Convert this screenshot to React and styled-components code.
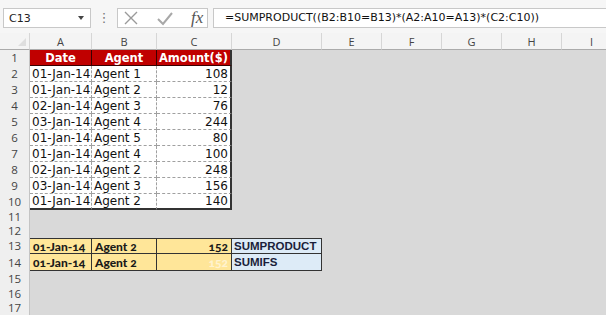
import React from 'react';
import styled, { createGlobalStyle, css } from 'styled-components';

const GlobalStyle = createGlobalStyle`
  html, body {
    margin: 0;
    padding: 0;
    background: #ffffff;
  }
  * { box-sizing: border-box; }
`;

// data
const columns = ['A', 'B', 'C', 'D', 'E', 'F', 'G', 'H', 'I'];
const colWidths = '30px 62px 65px 75px 90px 60px 60px 60px 60px 60px';
const rowHeights = '17px 16px 16px 16px 16px 16px 16px 16px 16px 16px 16px 14px 14px 16px 17px 15px 15px 14px';

const records = [
  ['01-Jan-14', 'Agent 1', 108],
  ['01-Jan-14', 'Agent 2', 12],
  ['02-Jan-14', 'Agent 3', 76],
  ['03-Jan-14', 'Agent 4', 244],
  ['01-Jan-14', 'Agent 5', 80],
  ['01-Jan-14', 'Agent 4', 100],
  ['02-Jan-14', 'Agent 2', 248],
  ['03-Jan-14', 'Agent 3', 156],
  ['01-Jan-14', 'Agent 2', 140],
];

const results = [
  { date: '01-Jan-14', agent: 'Agent 2', value: 152, label: 'SUMPRODUCT', faint: false },
  { date: '01-Jan-14', agent: 'Agent 2', value: 152, label: 'SUMIFS', faint: true },
];

export default function App() {
  const blanks = (n) => Array.from({ length: n });

  return (
    <Page>
      <GlobalStyle />
      <Toolbar>
        <NameBox>
          <span>C13</span>
          <Caret />
        </NameBox>
        <Grip>⋮</Grip>
        <FxBox>
          <svg width="16" height="16" viewBox="0 0 16 16">
            <path d="M2 2 L14 14 M14 2 L2 14" stroke="#9a9a9a" strokeWidth="1.4" fill="none" />
          </svg>
          <svg width="18" height="16" viewBox="0 0 18 16">
            <path d="M2 9 L7 14 L16 3" stroke="#a8a8a8" strokeWidth="2" fill="none" />
          </svg>
          <Fx>fx</Fx>
        </FxBox>
        <Formula>=SUMPRODUCT((B2:B10=B13)*(A2:A10=A13)*(C2:C10))</Formula>
      </Toolbar>

      <Sheet>
        <Corner />
        {columns.map((c) => (
          <ColHead key={c}>{c}</ColHead>
        ))}

        {/* row 1 */}
        <RowHead>1</RowHead>
        <Cell kind="head">Date</Cell>
        <Cell kind="head">Agent</Cell>
        <Cell kind="head" last>Amount($)</Cell>
        {blanks(6).map((_, i) => <Cell key={i} />)}

        {records.map((r, i) => (
          <React.Fragment key={i}>
            <RowHead>{i + 2}</RowHead>
            <Cell kind="data" bottom={i === records.length - 1}>{r[0]}</Cell>
            <Cell kind="data" bottom={i === records.length - 1}>{r[1]}</Cell>
            <Cell kind="data" right last bottom={i === records.length - 1}>{r[2]}</Cell>
            {blanks(6).map((_, j) => <Cell key={j} />)}
          </React.Fragment>
        ))}

        {[11, 12].map((n) => (
          <React.Fragment key={n}>
            <RowHead>{n}</RowHead>
            {blanks(9).map((_, j) => <Cell key={j} />)}
          </React.Fragment>
        ))}

        {results.map((r, i) => (
          <React.Fragment key={i}>
            <RowHead>{13 + i}</RowHead>
            <Cell kind="yellow" top={i === 0}>{r.date}</Cell>
            <Cell kind="yellow" top={i === 0}>{r.agent}</Cell>
            <Cell kind="yellow" top={i === 0} right faint={r.faint}>{r.value}</Cell>
            <Cell kind="blue" top={i === 0}>{r.label}</Cell>
            {blanks(5).map((_, j) => <Cell key={j} />)}
          </React.Fragment>
        ))}

        {[15, 16, 17].map((n) => (
          <React.Fragment key={n}>
            <RowHead>{n}</RowHead>
            {blanks(9).map((_, j) => <Cell key={j} />)}
          </React.Fragment>
        ))}
      </Sheet>
    </Page>
  );
}

const Page = styled.div`
  width: 606px;
  height: 318px;
  overflow: hidden;
  background: #ffffff;
  font-family: "DejaVu Sans", Verdana, sans-serif;
`;

const Toolbar = styled.div`
  height: 33px;
  background: #f6f6f6;
  display: flex;
  align-items: flex-start;
  padding: 8px 0 0 3px;
`;

const NameBox = styled.div`
  width: 88px;
  height: 20px;
  background: #fff;
  border: 1px solid #c8c8c8;
  display: flex;
  align-items: center;
  justify-content: space-between;
  padding: 0 6px 0 5px;
  font-size: 11px;
  color: #222;
`;

const Caret = styled.span`
  width: 0;
  height: 0;
  border-left: 3px solid transparent;
  border-right: 3px solid transparent;
  border-top: 4px solid #444;
`;

const Grip = styled.div`
  width: 26px;
  text-align: center;
  color: #777;
  font-size: 13px;
  line-height: 20px;
`;

const FxBox = styled.div`
  width: 91px;
  height: 20px;
  background: #fff;
  border: 1px solid #c8c8c8;
  display: flex;
  align-items: center;
  gap: 17px;
  padding-left: 5px;
`;

const Fx = styled.span`
  font-family: "Liberation Serif", "Times New Roman", serif;
  font-style: italic;
  font-size: 17px;
  color: #555;
  line-height: 18px;
`;

const Formula = styled.div`
  flex: 1;
  height: 20px;
  margin-left: 5px;
  background: #fff;
  border: 1px solid #c8c8c8;
  border-right: none;
  padding-left: 11px;
  font-size: 11px;
  line-height: 18px;
  color: #111;
  white-space: nowrap;
`;

const Sheet = styled.div`
  display: grid;
  grid-template-columns: ${colWidths};
  grid-template-rows: ${rowHeights};
  background: #d9d9d9;
`;

const Corner = styled.div`
  background: #f4f4f4;
  border-right: 1px solid #d6d6d6;
  border-bottom: 1px solid #ababab;
  position: relative;
  &::after {
    content: '';
    position: absolute;
    right: 3px;
    bottom: 3px;
    border-left: 8px solid transparent;
    border-bottom: 8px solid #dedede;
  }
`;

const ColHead = styled.div`
  background: #f4f4f4;
  border-right: 1px solid #d6d6d6;
  border-bottom: 1px solid #ababab;
  font-family: "Open Sans", "Noto Sans", sans-serif;
  font-size: 11px;
  color: #444;
  display: flex;
  align-items: center;
  justify-content: center;
`;

const RowHead = styled.div`
  background: #efefef;
  border-right: 1px solid #c4c4c4;
  font-family: "Open Sans", "Noto Sans", sans-serif;
  font-size: 11.5px;
  color: #444;
  display: flex;
  align-items: center;
  justify-content: center;
  line-height: 1;
`;

const kinds = {
  head: css`
    background: #c00000;
    color: #fff;
    font-weight: bold;
    font-size: 11.5px;
    justify-content: center;
    border-right: 1px solid #3a0000;
    border-bottom: 1px solid #3a0000;
  `,
  data: css`
    background: #fff;
    color: #111;
    font-size: 12px;
    padding: 0 2px;
    border-right: 1px dashed #a0a0a0;
    border-bottom: 1px dashed #a0a0a0;
  `,
  yellow: css`
    background: #ffe699;
    color: #1a1a1a;
    font-family: Lato, "Open Sans", sans-serif;
    font-weight: 900;
    font-size: 12px;
    font-variant-numeric: oldstyle-nums;
    padding: 0 3px;
    border-right: 1px solid #333;
    border-bottom: 1px solid #333;
  `,
  blue: css`
    background: #ddebf7;
    color: #1b1f3b;
    font-family: "Liberation Sans", Arial, sans-serif;
    font-weight: bold;
    font-size: 11.5px;
    padding: 0 2px;
    border-right: 1px solid #333;
    border-bottom: 1px solid #333;
  `,
};

const Cell = styled.div`
  display: flex;
  align-items: center;
  white-space: nowrap;
  overflow: hidden;
  ${(p) => p.kind && kinds[p.kind]}
  ${(p) => p.right && css`justify-content: flex-end;`}
  ${(p) => p.last && css`border-right: 2px solid #333;`}
  ${(p) => p.bottom && css`border-bottom: 2px solid #333;`}
  ${(p) => p.top && css`border-top: 1px solid #333;`}
  ${(p) => p.faint && css`color: #fff3cf;`}
`;
